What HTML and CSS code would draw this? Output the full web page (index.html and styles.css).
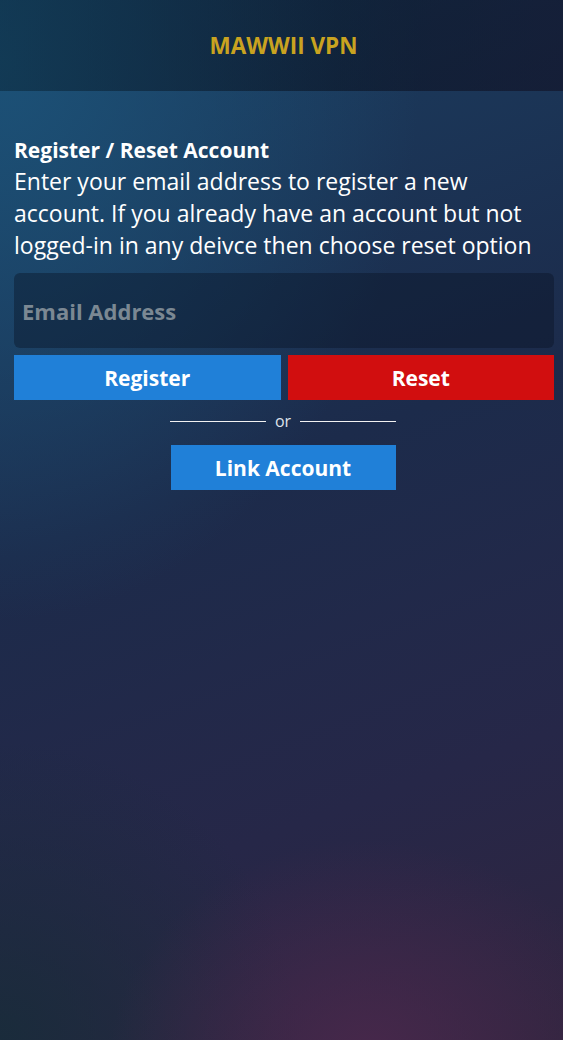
FILE: index.html
```html
<!DOCTYPE html>
<html lang="en">
<head>
<meta charset="utf-8">
<title>MAWWII VPN</title>
<link rel="stylesheet" href="styles.css">
</head>
<body>
<div class="app">
  <header class="topbar">
    <h1 class="brand">MAWWII VPN</h1>
  </header>
  <main class="content">
    <h2 class="title">Register / Reset Account</h2>
    <p class="desc">Enter your email address to register a new account. If you already have an account but not logged-in in any deivce then choose reset option</p>
    <input class="email" type="email" placeholder="Email Address">
    <div class="actions">
      <button class="btn btn-blue">Register</button>
      <button class="btn btn-red">Reset</button>
    </div>
    <div class="divider"><span class="line"></span><span class="or">or</span><span class="line"></span></div>
    <div class="link-row">
      <button class="btn btn-blue btn-link">Link Account</button>
    </div>
  </main>
</div>
</body>
</html>
```

FILE: styles.css
```css
html, body {
  margin: 0;
  padding: 0;
  height: 100%;
}
body {
  font-family: "Open Sans", "Noto Sans", sans-serif;
  color: #fff;
  background-color: #1e2844;
  background-image:
    radial-gradient(ellipse 260px 220px at 370px 1060px, rgba(74, 40, 76, 0.9), rgba(74, 40, 76, 0) 100%),
    radial-gradient(ellipse 420px 560px at 0px 60px, rgba(28, 82, 120, 0.95), rgba(28, 82, 120, 0) 100%),
    radial-gradient(ellipse 300px 300px at 0px 1040px, rgba(24, 44, 58, 0.9), rgba(24, 44, 58, 0) 100%),
    linear-gradient(160deg, #1a3f62 0%, #1c2b4b 45%, #262748 75%, #30253f 100%);
  background-repeat: no-repeat;
  min-height: 1040px;
}
.app {
  display: flex;
  flex-direction: column;
  min-height: 1040px;
}
.topbar {
  height: 91px;
  padding-left: 4px;
  display: flex;
  align-items: center;
  justify-content: center;
  background: linear-gradient(90deg, rgba(6, 30, 44, 0.45), rgba(8, 14, 28, 0.55) 60%, rgba(16, 12, 30, 0.55));
}
.brand {
  margin: 0;
  font-size: 22.5px;
  font-weight: 700;
  color: #c9a320;
  letter-spacing: 0;
}
.content {
  padding: 44px 9px 0 14px;
  display: flex;
  flex-direction: column;
}
.title {
  margin: 0;
  font-size: 21px;
  font-weight: 700;
  line-height: 30px;
}
.desc {
  margin: 0;
  padding-right: 20px;
  font-size: 23px;
  line-height: 32px;
  font-weight: 400;
  letter-spacing: 0;
}
.email {
  margin-top: 12px;
  height: 75px;
  box-sizing: border-box;
  border: none;
  border-radius: 6px;
  background: rgba(8, 16, 32, 0.38);
  padding: 0 8px;
  font-family: inherit;
  font-size: 22px;
  font-weight: 700;
  color: #fff;
  outline: none;
}
.email::placeholder {
  color: #7b8893;
}
.actions {
  margin-top: 7px;
  display: grid;
  grid-template-columns: 1fr 1fr;
  gap: 7px;
}
.btn {
  height: 45px;
  border: none;
  border-radius: 0;
  font-family: inherit;
  font-size: 21px;
  font-weight: 700;
  color: #fff;
  padding: 0;
}
.btn-blue { background: #2080d8; }
.btn-red { background: #d10e0f; }
.divider {
  margin-top: 11px;
  display: flex;
  align-items: center;
  justify-content: center;
  gap: 9px;
  height: 20px;
  padding-right: 2px;
}
.line {
  width: 96px;
  height: 1px;
  background: #f2f2f2;
}
.or {
  font-size: 16px;
  color: #dfe3ea;
  line-height: 20px;
}
.link-row {
  margin-top: 14px;
  display: flex;
  justify-content: center;
  padding-right: 2px;
}
.btn-link {
  width: 225px;
}
```
